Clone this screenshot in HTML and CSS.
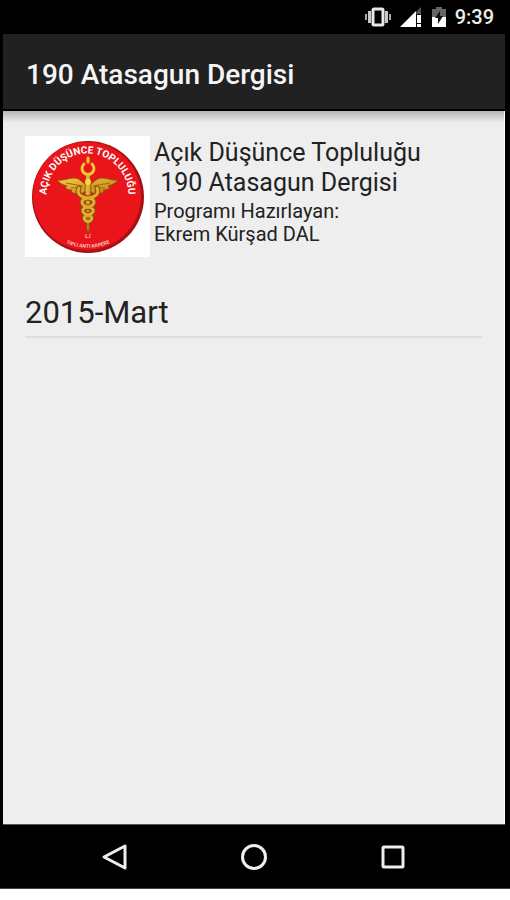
FILE: index.html
```html
<!DOCTYPE html>
<html lang="tr">
<head>
    <meta charset="UTF-8">
    <meta name="viewport" content="width=device-width, initial-scale=1.0">
    <title>190 Atasagun Dergisi</title>
    <link rel="stylesheet" href="styles.css">
</head>
<body>
    <div class="phone">
        <div class="status-bar">
            <svg class="vibrate" width="28" height="22" viewBox="0 0 28 22" aria-hidden="true">
                <rect x="9" y="3" width="10" height="16" rx="1" fill="none" stroke="#e8e8e8" stroke-width="3"/>
                <path d="M5.500 5v12M22.500 5v12" stroke="#c8c8c8" stroke-width="3"/>
                <path d="M2 8v6M26 8v6" stroke="#aaa" stroke-width="2"/>
            </svg>
            <svg class="signal" width="22" height="22" viewBox="0 0 22 22" aria-hidden="true">
                <path d="M21 1v7h-5V6z" fill="#555"/>
                <path d="M0 21L16 5v16z" fill="#fff"/>
                <path d="M17 9h4v8h-4zM17 18h4v3h-4z" fill="#fff"/>
            </svg>
            <svg class="battery" width="14" height="22" viewBox="0 0 14 22" aria-hidden="true">
                <path d="M0 3h4V1h6v2h4v9H0z" fill="#666"/>
                <path d="M0 11h14v10H0z" fill="#fff"/>
                <path d="M8 5L3 12h3v6l5-8H8z" fill="#111"/>
            </svg>
            <span class="clock">9:39</span>
        </div>

        <header class="app-bar">
            <h1>190 Atasagun Dergisi</h1>
        </header>

        <main class="content">
            <div class="about">
                <svg class="logo" viewBox="0 0 125 121" role="img" aria-label="Açık Düşünce Topluluğu">
                    <defs>
                        <path id="arcTop" d="M22 66A41 42 0 1 1 103 66"/>
                        <path id="arcBottom" d="M32 102A54 54 0 0 0 94 102"/>
                        <linearGradient id="gold" x1="0" y1="0" x2="1" y2="1">
                            <stop offset="0" stop-color="#f3cc3c"/>
                            <stop offset="1" stop-color="#bd8118"/>
                        </linearGradient>
                    </defs>
                    <rect width="125" height="121" fill="#fff"/>
                    <circle cx="63" cy="61" r="56" fill="#a90f14"/>
                    <circle cx="62" cy="60" r="54" fill="#e9151b"/>
                    <text class="logo-text"><textPath href="#arcTop" startOffset="50%" text-anchor="middle">AÇIK DÜŞÜNCE TOPLULUĞU</textPath></text>
                    <!-- kanatlar -->
                    <path d="M61 49C56 45 54 42 49 42c-6 0-10 3-17 2 3 4 7 5 10 6l-2 1c2 3 5 3 7 3l-1 2c6 3 11 2 16-1zM65 49c5-4 7-7 12-7 6 0 10 3 16 2-3 4-7 5-10 6l2 1c-2 3-5 3-7 3l1 2c-6 3-11 2-15-1z" fill="url(#gold)" stroke="#96500f" stroke-width="1"/>
                    <path d="M41 47l17 3M46 52l11-1M85 47l-17 3M80 52l-11-1" stroke="#a86714" stroke-width="1"/>
                    <!-- asa ve yılanlar -->
                    <path d="M61 39h4l1 13-2 43h-2l-2-43z" fill="url(#gold)" stroke="#96500f" stroke-width="1"/>
                    <path d="M59 28a6 6 0 1 0 8 0 M63 22v4" fill="none" stroke="#f2c832" stroke-width="3" stroke-linecap="round"/>
                    <g fill="none" stroke-linecap="round">
                        <path d="M54 52c-3 6 2 9 9 10 8 1 8 7 0 9s-6 6 0 8 4 5 0 7M72 52c3 6-2 9-9 10-8 1-8 7 0 9s6 6 0 8-4 5 0 7" stroke="#8d4711" stroke-width="5"/>
                        <path d="M54 52c-3 6 2 9 9 10 8 1 8 7 0 9s-6 6 0 8 4 5 0 7M72 52c3 6-2 9-9 10-8 1-8 7 0 9s6 6 0 8-4 5 0 7" stroke="#e2ad2b" stroke-width="3"/>
                    </g>
                    <circle cx="63" cy="46" r="3" fill="#f6d64c"/>
                    <text class="logo-small" x="63" y="102" text-anchor="middle">L.İ</text>
                    <text class="logo-small"><textPath href="#arcBottom" startOffset="50%" text-anchor="middle">TIPLI ANTI KAPERE</textPath></text>
                </svg>
                <div class="about-text">
                    <p class="name">Açık Düşünce Topluluğu</p>
                    <p class="name">&nbsp;190 Atasagun Dergisi</p>
                    <p class="author">Programı Hazırlayan:<br>Ekrem Kürşad DAL</p>
                </div>
            </div>

            <ul class="issues">
                <li><a href="#2015-mart">2015-Mart</a></li>
            </ul>
        </main>

        <nav class="nav-bar">
            <button type="button" aria-label="Geri">
                <svg width="30" height="30" viewBox="0 0 30 30"><path d="M25 4v22L4 15z" fill="none" stroke="#eee" stroke-width="3" stroke-linejoin="round"/></svg>
            </button>
            <button type="button" aria-label="Ana ekran">
                <svg width="30" height="30" viewBox="0 0 30 30"><circle cx="15" cy="15" r="11.500" fill="none" stroke="#eee" stroke-width="3"/></svg>
            </button>
            <button type="button" aria-label="Son uygulamalar">
                <svg width="30" height="30" viewBox="0 0 30 30"><rect x="5" y="5" width="20" height="20" rx="1" fill="none" stroke="#eee" stroke-width="3"/></svg>
            </button>
        </nav>
    </div>
</body>
</html>
```
FILE: styles.css
```css
* {
    box-sizing: border-box;
}
body {
    display: flex;
    flex-direction: column;
    min-height: 100vh;
    margin: 0;
    padding-bottom: 11px;
    background-color: #fff;
    font-family: Roboto, "Noto Sans", sans-serif;
    color: #222;
}
h1, p, ul {
    margin: 0;
    padding: 0;
}
.phone {
    flex: 1;
    display: flex;
    flex-direction: column;
    padding: 0 5px 0 3px;
    background-color: #000;
    border-bottom: 1px solid #444;
}
.status-bar {
    display: flex;
    align-items: center;
    justify-content: flex-end;
    height: 34px;
    padding-right: 11px;
    color: #eee;
}
.signal {
    margin-left: 8px;
}
.battery {
    margin-left: 10px;
}
.clock {
    margin-left: 9px;
    font-size: 20px;
    font-weight: 500;
}
.app-bar {
    display: flex;
    align-items: center;
    height: 77px;
    padding: 6px 23px 0;
    background-color: #212121;
    border-bottom: 2px solid #000;
}
.app-bar h1 {
    font-size: 28px;
    font-weight: 500;
    line-height: 36px;
    color: #f5f5f5;
}
.content {
    flex: 1;
    padding: 25px 22px;
    background: linear-gradient(#b5b5b5, #eee 12px);
    border-right: 1px solid #fff;
}
.about {
    display: flex;
    gap: 4px;
}
.logo {
    flex: none;
    width: 125px;
    height: 121px;
}
.logo-text {
    font-size: 10px;
    font-weight: 700;
    fill: #fff;
}
.logo-small {
    font-size: 5px;
    font-weight: 700;
    fill: #f8c8bc;
}
.about-text {
    padding-top: 2px;
}
.name {
    font-size: 25px;
    line-height: 30px;
}
.author {
    margin-top: 2px;
    font-size: 20px;
    line-height: 23px;
}
.issues {
    margin-top: 32px;
    list-style: none;
}
.issues li {
    border-bottom: 2px solid #ddd;
}
.issues a {
    display: block;
    padding: 6px 0 5px;
    font-size: 31px;
    line-height: 36px;
    color: #222;
    text-decoration: none;
}
.nav-bar {
    display: flex;
    justify-content: center;
    height: 64px;
    padding: 0 43px;
    border-top: 1px solid #555;
}
.nav-bar button {
    flex: 1;
    display: flex;
    align-items: center;
    justify-content: center;
    padding: 0;
    border: none;
    background: none;
    cursor: pointer;
}
```
